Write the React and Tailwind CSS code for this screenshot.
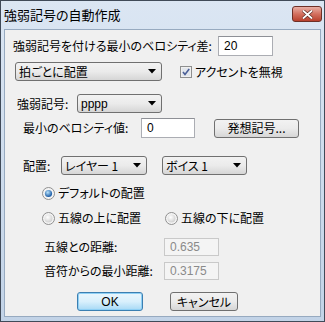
import React from "react";

const jp = "font-['Noto_Sans_CJK_JP',sans-serif] [font-feature-settings:'palt']";

function Arrow() {
  return (
    <svg width="8" height="5" viewBox="0 0 8 5" className="shrink-0">
      <path d="M0 0h8L4 4.5z" fill="#000" />
    </svg>
  );
}

function Select({ w, text }) {
  return (
    <div
      className={`${w} h-[19px] flex items-center justify-between pl-[3px] pr-[5px] border border-[#707070] rounded-[3px] bg-gradient-to-b from-[#f2f2f2] via-[#ebebeb] to-[#d6d6d6] text-[12px]`}
    >
      <span className="leading-none">{text}</span>
      <Arrow />
    </div>
  );
}

function Input({ w, h = "h-[20px]", value, disabled }) {
  return (
    <div
      className={`${w} ${h} flex items-center pl-[5px] border text-[12px] font-['Liberation_Sans_Narrow','Liberation_Sans',sans-serif] ${
        disabled
          ? "border-[#c9c9c9] bg-[#f4f4f4] text-[#8a8a8a]"
          : "border-[#abadb3] border-t-[#8e9096] bg-white text-black"
      }`}
    >
      {value}
    </div>
  );
}

function Radio({ checked }) {
  return (
    <svg width="13" height="13" viewBox="0 0 13 13" className="shrink-0">
      <defs>
        <radialGradient id={checked ? "rc" : "ru"} cx="40%" cy="35%" r="60%">
          <stop offset="0%" stopColor={checked ? "#b9e3fb" : "#ffffff"} />
          <stop offset="100%" stopColor={checked ? "#1f5fa8" : "#d4d4d4"} />
        </radialGradient>
      </defs>
      <circle cx="6.5" cy="6.5" r="6" fill="#f4f4f4" stroke="#8f8f8f" />
      <circle cx="6.5" cy="6.5" r={checked ? 3.6 : 4} fill={`url(#${checked ? "rc" : "ru"})`} />
    </svg>
  );
}

function Check() {
  return (
    <svg width="12" height="12" viewBox="0 0 12 12" className="shrink-0">
      <rect x="0.5" y="0.5" width="11" height="11" fill="#f0f0f0" stroke="#8e8f8f" />
      <rect x="2" y="2" width="8" height="8" fill="#e2e6ec" />
      <path d="M3 6l2 2.5L9.2 3" stroke="#4a5f97" strokeWidth="1.6" fill="none" />
    </svg>
  );
}

function Button({ w, children, focus }) {
  return (
    <div
      className={`${w} h-[19px] flex items-center justify-center rounded-[3px] border text-[12px] ${
        focus
          ? "border-[#3c7fb1] bg-gradient-to-b from-[#eaf6fd] via-[#d9f0fc] to-[#a7d9f5] shadow-[inset_0_0_0_1px_#8fd0f5]"
          : "border-[#707070] bg-gradient-to-b from-[#f2f2f2] via-[#ebebeb] to-[#d6d6d6]"
      }`}
    >
      {children}
    </div>
  );
}

export default function App() {
  return (
    <div className={`w-[325px] h-[322px] flex flex-col border border-[#404a58] bg-gradient-to-b from-[#dbe6f3] to-[#c2d3e7] ${jp} text-black`}>
      <div className="h-[28px] flex items-start justify-between pl-[3px] pr-[2px]">
        <span className="mt-[6px] text-[13px] leading-[16px]">強弱記号の自動作成</span>
        <div className="mt-[5px] w-[30px] h-[16px] rounded-[3px] border border-[#6e3027] bg-gradient-to-b from-[#e7aea5] via-[#d3705f] to-[#b8402d] flex items-center justify-center">
          <svg width="11" height="9" viewBox="0 0 11 9">
            <path d="M1 0.5l9 8M10 0.5l-9 8" stroke="#5a2a22" strokeWidth="3.2" />
            <path d="M1 0.5l9 8M10 0.5l-9 8" stroke="#fff" strokeWidth="1.8" />
          </svg>
        </div>
      </div>
      <div className="mx-[3px] mb-[4px] flex-1 bg-[#f0f0f0] border border-[#97aac0] flex flex-col text-[12px] leading-none">
        <div className="mt-[6px] ml-[8px] flex items-center h-[20px]">
          <span className="w-[205px]">強弱記号を付ける最小のベロシティ差:</span>
          <Input w="w-[55px]" value="20" />
        </div>
        <div className="mt-[6px] ml-[10px] flex items-center h-[19px]">
          <Select w="w-[147px]" text="拍ごとに配置" />
          <div className="ml-[18px] flex items-center gap-[3px]">
            <Check />
            <span>アクセントを無視</span>
          </div>
        </div>
        <div className="mt-[13px] ml-[12px] flex items-center h-[19px]">
          <span className="w-[60px]">強弱記号:</span>
          <Select w="w-[85px]" text={<span className="font-['Liberation_Sans',sans-serif]">pppp</span>} />
        </div>
        <div className="mt-[5px] ml-[18px] flex items-center h-[20px]">
          <span className="w-[118px]">最小のベロシティ値:</span>
          <Input w="w-[54px]" value="0" />
          <div className="ml-[19px]">
            <Button w="w-[85px]">発想記号...</Button>
          </div>
        </div>
        <div className="mt-[18px] ml-[18px] flex items-center h-[19px]">
          <span className="w-[38px]">配置:</span>
          <Select w="w-[86px]" text="レイヤー 1" />
          <div className="ml-[15px]">
            <Select w="w-[85px]" text="ボイス 1" />
          </div>
        </div>
        <div className="mt-[11px] ml-[37px] flex items-center h-[14px] gap-[3px]">
          <Radio checked />
          <span>デフォルトの配置</span>
        </div>
        <div className="mt-[11px] ml-[37px] flex items-center h-[14px]">
          <div className="w-[123px] flex items-center gap-[3px]">
            <Radio />
            <span>五線の上に配置</span>
          </div>
          <div className="flex items-center gap-[3px]">
            <Radio />
            <span>五線の下に配置</span>
          </div>
        </div>
        <div className="mt-[13px] ml-[39px] flex items-center h-[18px]">
          <span className="w-[120px]">五線との距離:</span>
          <Input w="w-[55px]" h="h-[18px]" value="0.635" disabled />
        </div>
        <div className="mt-[6px] ml-[39px] flex items-center h-[18px]">
          <span className="w-[120px]">音符からの最小距離:</span>
          <Input w="w-[55px]" h="h-[18px]" value="0.3175" disabled />
        </div>
        <div className="mt-[12px] ml-[72px] flex items-center h-[19px]">
          <Button w="w-[66px]" focus>
            <span className="font-['Liberation_Sans',sans-serif]">OK</span>
          </Button>
          <div className="ml-[27px]">
            <Button w="w-[68px]">キャンセル</Button>
          </div>
        </div>
      </div>
    </div>
  );
}
